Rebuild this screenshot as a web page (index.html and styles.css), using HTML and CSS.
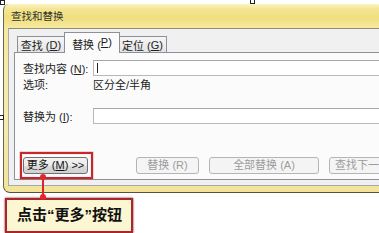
FILE: index.html
```html
<!DOCTYPE html>
<html lang="zh-CN">
<head>
    <meta charset="UTF-8">
    <title>查找和替换</title>
    <link rel="stylesheet" href="styles.css">
</head>
<body>
    <div class="dialog">
        <div class="titlebar">查找和替换</div>
        <div class="client">
            <div class="tabs">
                <div class="tab tab-find">查找 (<u>D</u>)</div>
                <div class="tab active">替换 (<u>P</u>)</div>
                <div class="tab tab-goto">定位 (<u>G</u>)</div>
            </div>
            <div class="panel">
                <div class="row">
                    <span class="label">查找内容 (<u>N</u>):</span>
                    <div class="input"><span class="caret"></span></div>
                </div>
                <div class="row">
                    <span class="label">选项:</span>
                    <span class="value">区分全/半角</span>
                </div>
                <div class="row row-replace">
                    <span class="label">替换为 (<u>I</u>):</span>
                    <div class="input"></div>
                </div>
                <div class="buttons">
                    <span class="highlight">
                        <button class="btn btn-more">更多 (<u>M</u>) &gt;&gt;</button>
                    </span>
                    <button class="btn disabled btn-replace">替换 (R)</button>
                    <button class="btn disabled btn-all">全部替换 (A)</button>
                    <button class="btn disabled btn-next">查找下一处</button>
                </div>
            </div>
        </div>
    </div>

    <div class="callout">点击“更多”按钮</div>

    <!-- 连接线和选择手柄 -->
    <div class="connector"></div>
    <div class="dot dot-top"></div>
    <div class="dot dot-bottom"></div>
    <div class="handle handle-tl"></div>
    <div class="handle handle-top"></div>
    <div class="handle handle-left"></div>
</body>
</html>
```

FILE: styles.css
```css
body {
    margin: 0;
    width: 379px;
    height: 233px;
    overflow: hidden;
    position: relative;
    background: #fff;
    font-family: "Liberation Sans", "Noto Sans CJK SC", sans-serif;
    font-size: 11px;
    color: #222;
}
u {
    text-decoration: underline;
}
.dialog {
    margin: 4px 0 0 3px;
    width: 420px;
    height: 188px;
    padding: 0 0 0 4px;
    border-left: 1px solid #6a6550;
    border-bottom: 1px solid #55513f;
    border-radius: 6px 0 0 7px;
    background: linear-gradient(#fbf4c4 0, #f4e592 5px, #f0df7e 14px, #f6ea9f 24px, #f6ebb0 60%, #f3e49a 100%);
}
.titlebar {
    height: 24px;
    line-height: 24px;
    padding-left: 3px;
    font-size: 10.5px;
    color: #333;
}
.client {
    height: 153px;
    background: #f0f0f0;
    border-top: 1px solid #8c8a7e;
    border-left: 1px solid #a9a9a9;
    border-bottom: 1px solid #a9a9a9;
    padding: 3px 0 0 5px;
}
.tabs {
    display: flex;
    align-items: flex-end;
    height: 20px;
    padding-left: 3px;
}
.tab {
    box-sizing: border-box;
    height: 16px;
    border: 1px solid #8d9099;
    border-bottom: none;
    background: linear-gradient(#f6f6f6, #e4e4e4);
    display: flex;
    align-items: center;
    justify-content: center;
    padding-top: 1px;
    white-space: pre;
}
.tab-find {
    width: 48px;
}
.tab-goto {
    width: 49px;
    margin-left: -1px;
}
.tab.active {
    width: 56px;
    height: 21px;
    margin: 0 -1px -1px -1px;
    background: #fbfbfb;
    align-items: flex-start;
    padding-top: 3px;
    position: relative;
    z-index: 1;
}
.panel {
    height: 128px;
    background: #fbfbfb;
    border: 1px solid #8d9099;
    border-right: none;
    padding: 7px 0 0 8px;
    box-sizing: border-box;
}
.row {
    display: grid;
    grid-template-columns: 70px 1fr;
    align-items: center;
    height: 16px;
}
.row-replace {
    margin-top: 16px;
}
.input {
    box-sizing: border-box;
    height: 16px;
    border: 1px solid #b8b8b8;
    border-top-color: #a6a6a6;
    background: #fff;
    padding: 2px 0 0 3px;
}
.caret {
    display: block;
    width: 1px;
    height: 10px;
    background: #222;
}
.buttons {
    display: flex;
    align-items: center;
    margin-top: 28px;
}
.highlight {
    display: inline-flex;
    margin-left: -3px;
    padding: 3px 3px 3px 1px;
    border: 2px solid #c8262c;
    box-shadow: 0 0 1px #7d1a1c, inset 0 0 1px #e88;
}
.btn {
    box-sizing: border-box;
    height: 17px;
    padding: 0;
    font-family: inherit;
    font-size: 11px;
    border-radius: 3px;
    line-height: 15px;
    white-space: nowrap;
}
.btn-more {
    width: 65px;
    border: 1px solid #707070;
    background: linear-gradient(#f3f3f3 0, #ebebeb 50%, #dcdcdc 51%, #d0d0d0 100%);
    color: #111;
}
.disabled {
    border: 1px solid #b3b6b9;
    background: #f4f4f4;
    color: #9c9c9c;
}
.btn-replace {
    width: 63px;
    margin-left: 43px;
}
.btn-all {
    width: 110px;
    margin-left: 10px;
}
.btn-next {
    width: 80px;
    margin-left: 10px;
    flex-shrink: 0;
    text-align: left;
    padding-left: 5px;
}
.callout {
    box-sizing: border-box;
    margin: 5px 0 0 5px;
    width: 128px;
    height: 35px;
    border: 2px solid #a9262a;
    box-shadow: 0 0 2px #6b1a1c;
    background: #fcf6d2;
    padding-left: 10px;
    line-height: 30px;
    font-size: 15px;
    font-weight: bold;
    color: #111;
}
.connector {
    position: absolute;
    left: 42px;
    top: 177px;
    width: 2px;
    height: 21px;
    background: #d8262c;
}
.dot {
    position: absolute;
    left: 40px;
    width: 6px;
    height: 6px;
    border-radius: 50%;
    background: #e0282e;
}
.dot-top {
    top: 174px;
}
.dot-bottom {
    top: 194px;
}
.handle {
    position: absolute;
    width: 3px;
    height: 3px;
    border: 1px solid #222;
    background: #fff;
}
.handle-tl {
    left: 0;
    top: 0;
}
.handle-top {
    left: 250px;
    top: -1px;
}
.handle-left {
    left: -1px;
    top: 115px;
}
```
